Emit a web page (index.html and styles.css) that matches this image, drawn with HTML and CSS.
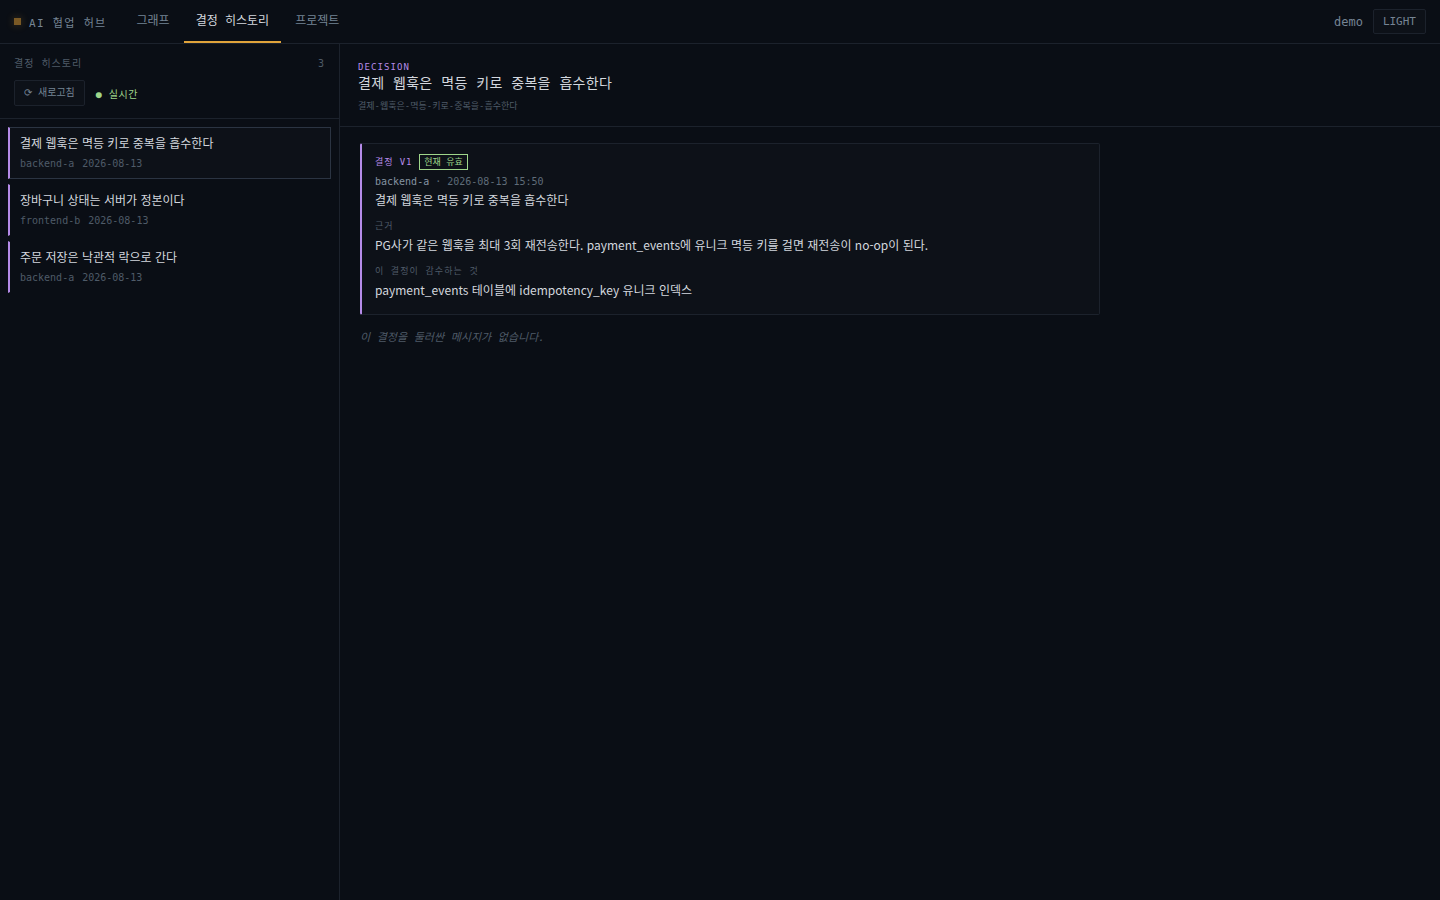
FILE: index.html
```html
<!DOCTYPE html>
<html lang="ko">
<head>
    <meta charset="UTF-8">
    <meta name="viewport" content="width=device-width, initial-scale=1.0">
    <title>AI 협업 허브</title>
    <link rel="stylesheet" href="styles.css">
</head>
<body>
    <header class="topbar">
        <div class="brand"><span class="brand-mark"></span>AI 협업 허브</div>
        <nav class="tabs">
            <a class="tab" href="#graph">그래프</a>
            <a class="tab active" href="#decisions">결정 히스토리</a>
            <a class="tab" href="#projects">프로젝트</a>
        </nav>
        <div class="topbar-right">
            <span class="user">demo</span>
            <button type="button" class="theme-btn">LIGHT</button>
        </div>
    </header>

    <div class="layout">
        <aside class="sidebar">
            <div class="sidebar-head">
                <div class="sidebar-title">
                    <span>결정 히스토리</span>
                    <span>3</span>
                </div>
                <div class="sidebar-tools">
                    <button type="button" class="refresh-btn">⟳ 새로고침</button>
                    <span class="live">● 실시간</span>
                </div>
            </div>
            <div class="decision-list">
                <button type="button" class="decision-item selected">
                    <span class="item-title">결제 웹훅은 멱등 키로 중복을 흡수한다</span>
                    <span class="item-meta"><span>backend-a</span><span>2026-08-13</span></span>
                </button>
                <button type="button" class="decision-item">
                    <span class="item-title">장바구니 상태는 서버가 정본이다</span>
                    <span class="item-meta"><span>frontend-b</span><span>2026-08-13</span></span>
                </button>
                <button type="button" class="decision-item">
                    <span class="item-title">주문 저장은 낙관적 락으로 간다</span>
                    <span class="item-meta"><span>backend-a</span><span>2026-08-13</span></span>
                </button>
            </div>
        </aside>

        <main class="detail">
            <div class="detail-head">
                <div class="kicker">DECISION</div>
                <h1>결제 웹훅은 멱등 키로 중복을 흡수한다</h1>
                <div class="slug">결제-웹훅은-멱등-키로-중복을-흡수한다</div>
            </div>
            <div class="detail-body">
                <article class="card">
                    <div class="card-top">
                        <span class="version">결정 V1</span>
                        <span class="badge">현재 유효</span>
                    </div>
                    <div class="card-meta"><span class="author">backend-a</span> · 2026-08-13 15:50</div>
                    <p>결제 웹훅은 멱등 키로 중복을 흡수한다</p>
                    <h2>근거</h2>
                    <p>PG사가 같은 웹훅을 최대 3회 재전송한다. payment_events에 유니크 멱등 키를 걸면 재전송이 no-op이 된다.</p>
                    <h2>이 결정이 감수하는 것</h2>
                    <p>payment_events 테이블에 idempotency_key 유니크 인덱스</p>
                </article>
                <div class="empty">이 결정을 둘러싼 메시지가 없습니다.</div>
            </div>
        </main>
    </div>
</body>
</html>
```
FILE: styles.css
```css
:root {
    --bg: #0a0e15;
    --panel: #0d1118;
    --line: #1c222c;
    --line-strong: #2b3442;
    --text: #d3d7de;
    --muted: #758494;
    --faint: #4f5b68;
    --purple: #b58be8;
    --green: #9fd68a;
    --amber: #e0a33a;
    --sans: "Noto Sans CJK KR", sans-serif;
    --mono: "DejaVu Sans Mono", "Noto Sans CJK KR", monospace;
}
* {
    box-sizing: border-box;
}
body {
    margin: 0;
    min-height: 100vh;
    display: flex;
    flex-direction: column;
    background: var(--bg);
    color: var(--text);
    font-family: var(--mono);
    font-size: 12px;
}
button {
    font-family: inherit;
    cursor: pointer;
}

/* top bar */
.topbar {
    display: flex;
    align-items: stretch;
    height: 44px;
    padding: 0 14px;
    border-bottom: 1px solid var(--line);
}
.brand {
    display: flex;
    align-items: center;
    gap: 8px;
    margin-right: 18px;
    color: var(--muted);
    font-size: 11px;
    letter-spacing: 0.12em;
}
.brand-mark {
    width: 7px;
    height: 7px;
    background: #7a5925;
    box-shadow: 0 0 8px rgba(224, 163, 58, 0.3);
}
.tabs {
    display: flex;
    gap: 2px;
}
.tab {
    display: flex;
    align-items: center;
    padding: 0 12px 2px;
    border-bottom: 2px solid transparent;
    color: var(--muted);
    text-decoration: none;
}
.tab.active {
    color: var(--text);
    border-bottom-color: var(--amber);
}
.topbar-right {
    display: flex;
    align-items: center;
    gap: 10px;
    margin-left: auto;
    color: var(--muted);
}
.theme-btn {
    height: 25px;
    padding: 0 9px;
    border: 1px solid var(--line);
    border-radius: 2px;
    background: var(--panel);
    color: var(--muted);
    font-size: 11px;
}

/* sidebar */
.layout {
    flex: 1;
    display: flex;
}
.sidebar {
    flex: 0 0 340px;
    border-right: 1px solid var(--line);
}
.sidebar-head {
    padding: 12px 14px;
    border-bottom: 1px solid var(--line);
}
.sidebar-title {
    display: flex;
    justify-content: space-between;
    color: var(--faint);
    font-size: 10px;
    line-height: 15px;
    letter-spacing: 0.1em;
}
.sidebar-tools {
    display: flex;
    align-items: center;
    gap: 11px;
    margin-top: 9px;
}
.refresh-btn {
    height: 26px;
    padding: 0 9px 3px;
    border: 1px solid var(--line);
    border-radius: 2px;
    background: var(--panel);
    color: var(--muted);
    font-size: 10px;
}
.live {
    color: var(--green);
    font-size: 10px;
    letter-spacing: 0.05em;
}
.decision-list {
    display: flex;
    flex-direction: column;
    gap: 5px;
    padding: 8px;
}
.decision-item {
    display: flex;
    flex-direction: column;
    gap: 5px;
    padding: 6px 10px 7px;
    border: 1px solid transparent;
    border-left: 2px solid var(--purple);
    background: none;
    color: var(--text);
    text-align: left;
}
.decision-item.selected {
    border-color: var(--line-strong);
    border-left-color: var(--purple);
    background: var(--panel);
}
.item-title {
    font-family: var(--sans);
    font-size: 12px;
    line-height: 17px;
}
.item-meta {
    display: flex;
    gap: 8px;
    color: var(--faint);
    font-size: 10px;
    line-height: 15px;
}

/* detail */
.detail {
    flex: 1;
    min-width: 0;
}
.detail-head {
    padding: 16px 18px 12px;
    border-bottom: 1px solid var(--line);
}
.kicker {
    color: var(--purple);
    font-size: 9px;
    line-height: 14px;
    letter-spacing: 0.12em;
}
h1 {
    margin: 0;
    font-size: 14px;
    font-weight: 400;
    line-height: 18px;
    letter-spacing: 0.02em;
}
.slug {
    margin-top: 7px;
    color: var(--faint);
    font-size: 9px;
    line-height: 15px;
}
.detail-body {
    padding: 16px 20px;
}
.card {
    max-width: 740px;
    padding: 10px 13px 14px;
    border: 1px solid var(--line);
    border-left: 2px solid var(--purple);
    border-radius: 2px;
    background: var(--panel);
}
.card-top {
    display: flex;
    align-items: center;
    gap: 7px;
    font-size: 9px;
    line-height: 14px;
}
.version {
    color: var(--purple);
    letter-spacing: 0.1em;
}
.badge {
    padding: 0 4px;
    border: 1px solid var(--green);
    color: var(--green);
}
.card-meta {
    margin-top: 4px;
    color: #5f6c79;
    font-size: 10px;
    line-height: 15px;
}
.author {
    color: #8593a2;
}
.card p {
    margin: 0;
    font-family: var(--sans);
    font-size: 12px;
    line-height: 21px;
}
.card h2 {
    margin: 9px 0 1px;
    color: var(--faint);
    font-size: 9px;
    font-weight: 400;
    line-height: 14px;
    letter-spacing: 0.12em;
}
.empty {
    margin-top: 14px;
    color: var(--faint);
    font-size: 11px;
    font-style: italic;
    line-height: 18px;
}
```
